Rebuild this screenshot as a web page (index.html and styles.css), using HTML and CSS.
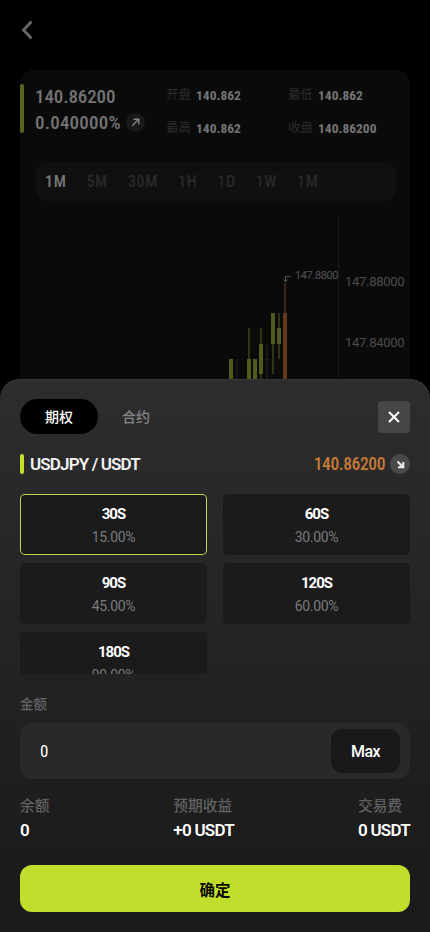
FILE: index.html
```html
<!DOCTYPE html>
<html lang="zh-CN">
<head>
<meta charset="utf-8">
<meta name="viewport" content="width=device-width, initial-scale=1">
<title>USDJPY / USDT</title>
<link rel="stylesheet" href="styles.css">
</head>
<body>
<main class="page">
  <header class="topbar">
    <svg class="back" width="12" height="20" viewBox="0 0 12 20"><path d="M10.500 1.500 2.500 10l8 8.500"/></svg>
  </header>
  <section class="market">
    <div class="summary">
      <i class="bar"></i>
      <div class="quote">
        <div class="price">140.86200</div>
        <div class="change"><span>0.040000%</span>
          <svg class="trend" width="19" height="19" viewBox="0 0 19 19"><circle cx="9.5" cy="9.5" r="9.5"/><path d="m6.2 12.8 6-6M7.5 6.2h5.3v5.3"/></svg>
        </div>
      </div>
      <dl class="stats">
        <div><dt>开盘</dt><dd>140.862</dd></div>
        <div><dt>最低</dt><dd>140.862</dd></div>
        <div><dt>最高</dt><dd>140.862</dd></div>
        <div><dt>收盘</dt><dd>140.86200</dd></div>
      </dl>
    </div>
    <nav class="periods">
      <span class="current">1M</span><span>5M</span><span>30M</span><span>1H</span><span>1D</span><span>1W</span><span>1M</span>
    </nav>
    <svg class="chart" width="390" height="178" viewBox="20 202 390 178">
      <path class="axis" d="M338.5 216v164"/>
      <path class="doji" d="M237 359v21M267 344v36M265 359.5h4"/>
      <path class="wick" d="M249 328v31M261 328v52M273 344v30M279 313v46"/>
      <path class="up" d="M229 359h4v21h-4zM247 359h4v21h-4zM253 359h4v21h-4zM259 344h4v30h-4zM271 313h4v31h-4zM277 328h4v16h-4z"/>
      <path class="down-wick" d="M285 283v30"/>
      <path class="down" d="M283 313h4v67h-4z"/>
      <path class="marker" d="M291 276.5h-5.500v5M283.500 279.500l2 2.500 2-2.500"/>
      <text class="high" x="295" y="279" textLength="43.500">147.8800</text>
      <text class="tick" x="345" y="286" textLength="59.500">147.88000</text>
      <text class="tick" x="345" y="347" textLength="59.500">147.84000</text>
    </svg>
  </section>
</main>
<section class="sheet">
  <div class="sheet-head">
    <div class="tabs"><span class="tab active">期权</span><span class="tab">合约</span></div>
    <button class="close"><svg width="12" height="12" viewBox="0 0 12 12"><path d="m1 1 10 10m0-10-10 10"/></svg></button>
  </div>
  <div class="pair">
    <i class="bar"></i>
    <h1>USDJPY / USDT</h1>
    <div class="last"><span>140.86200</span>
      <svg width="20" height="20" viewBox="0 0 20 20"><circle cx="10" cy="10" r="10"/><path d="m7.500 7.500 5 5M13.300 8v5.300H8"/></svg>
    </div>
  </div>
  <div class="durations">
    <div class="option selected"><b>30S</b><span>15.00%</span></div>
    <div class="option"><b>60S</b><span>30.00%</span></div>
    <div class="option"><b>90S</b><span>45.00%</span></div>
    <div class="option"><b>120S</b><span>60.00%</span></div>
    <div class="option"><b>180S</b><span>90.00%</span></div>
  </div>
  <div class="label">金额</div>
  <div class="amount"><span>0</span><button class="max">Max</button></div>
  <div class="totals">
    <div><span>余额</span><b>0</b></div>
    <div><span>预期收益</span><b>+0 USDT</b></div>
    <div><span>交易费</span><b>0 USDT</b></div>
  </div>
  <button class="confirm">确定</button>
</section>
</body>
</html>
```
FILE: styles.css
```css
* { box-sizing: border-box; }
body {
  margin: 0;
  height: 932px;
  position: relative;
  overflow: hidden;
  background: #000;
  color: #fff;
  font-family: Roboto, "Noto Sans CJK SC", sans-serif;
}
button { margin: 0; padding: 0; border: 0; font: inherit; color: inherit; display: flex; align-items: center; justify-content: center; }
svg { display: block; fill: none; flex: none; }
.page { padding: 0 20px; }
.topbar { height: 70px; padding: 20px 0 0 1px; }
.back path { stroke: #656565; stroke-width: 3; }
.market { height: 330px; background: #0a0a0b; border-radius: 14px; }
.summary { display: flex; padding-top: 14px; height: 92px; }
.bar { width: 4px; border-radius: 2px; background: #c1df2b; flex: none; }
.summary .bar { height: 49px; background: #59641a; }
.quote { width: 142px; height: 49px; padding-left: 11px; color: #747474; font-size: 19px; font-weight: 500; font-stretch: 87%; letter-spacing: -.1px; }
.price { height: 25px; line-height: 25px; }
.change { display: flex; align-items: center; gap: 5px; height: 27px; line-height: 27px; }
.change span { letter-spacing: .2px; }
.trend circle { fill: #19191a; }
.trend path { stroke: #858585; stroke-width: 1.4; }
.stats { margin: 0; display: grid; grid-template-columns: 122px 110px; grid-auto-rows: 33px; font-size: 13.500px; }
.stats div { display: flex; gap: 5px; line-height: 22px; }
.stats dt { color: #2c2c2c; font-size: 12.500px; }
.stats dd { margin: 0; color: #747474; font-weight: 700; font-stretch: 87%; }
.periods { margin: 0 14px 0 16px; height: 39px; border-radius: 10px; background: #101011; display: flex; align-items: center; gap: 20px; padding-left: 9px; color: #29292a; font-size: 16px; font-weight: 500; font-stretch: 87%; letter-spacing: .67px; }
.periods .current { color: #777; }
.chart { margin-top: 1px; font-family: Roboto, sans-serif; }
.axis { stroke: #1a1a1b; }
.doji { stroke: #242426; }
.wick { stroke: #3c4318; stroke-width: 1.5; }
.up { fill: #515b1e; }
.down-wick { stroke: #41271a; stroke-width: 2; }
.down { fill: #613a1b; }
.marker { stroke: #555; }
.high { fill: #555; font-size: 11px; }
.tick { fill: #4c4c4d; font-size: 13px; }

.sheet { position: absolute; left: 0; right: 0; bottom: 0; height: 553px; padding: 20px; border-radius: 20px 20px 0 0; background: linear-gradient(#2d2d2e, #1b1b1c 90%); box-shadow: inset 0 1px #363637; }
.sheet-head { display: flex; justify-content: space-between; align-items: center; height: 35px; }
.tabs { display: flex; }
.tab { width: 78px; height: 35px; line-height: 37px; border-radius: 18px; text-align: center; font-size: 14px; font-weight: 500; color: #858586; }
.tab:last-child { width: 76px; }
.tab.active { background: #000; color: #fff; }
.close { width: 32px; height: 32px; border-radius: 4px; background: #464647; }
.close path { stroke: #fff; stroke-width: 2; }
.pair { display: flex; align-items: center; height: 20px; margin-top: 20px; }
.pair .bar { height: 20px; }
.pair h1 { margin: 0 auto 0 6px; font-size: 17px; line-height: 20px; font-weight: 600; color: #f2f2f2; letter-spacing: -.85px; }
.last { display: flex; align-items: center; gap: 5px; font-size: 17.500px; color: #c67a37; font-weight: 500; font-stretch: 87%; letter-spacing: -.4px; }
.last circle { fill: #49494a; }
.last path { stroke: #eee; stroke-width: 2; }
.durations { display: grid; grid-template-columns: 187px 187px; column-gap: 16px; row-gap: 8px; grid-auto-rows: 61px; height: 180px; margin-top: 20px; overflow: hidden; }
.option { border-radius: 5px; background: #1b1b1c; display: flex; flex-direction: column; align-items: center; padding-top: 9px; }
.option.selected { box-shadow: inset 0 0 0 1px #bed74a; }
.option b { font-size: 15px; line-height: 23px; font-weight: 700; letter-spacing: -1px; }
.option span { font-size: 14px; line-height: 23px; color: #7a7a7b; letter-spacing: -.3px; }
.label { margin-top: 20px; height: 20px; line-height: 20px; font-size: 13.500px; font-weight: 500; color: #636364; }
.amount { margin-top: 9px; height: 56px; border-radius: 13px; background: #29292a; display: flex; align-items: center; justify-content: space-between; padding: 0 10px 0 20px; font-size: 17px; }
.amount > span { font-stretch: 87%; }
.max { width: 69px; height: 44px; border-radius: 11px; background: #19191b; font-size: 16px; font-weight: 500; letter-spacing: -.5px; }
.totals { display: flex; justify-content: space-between; margin-top: 16px; height: 50px; }
.totals div { display: flex; flex-direction: column; }
.totals span { height: 22px; line-height: 22px; font-size: 14.700px; font-weight: 500; color: #616162; }
.totals b { line-height: 27px; font-size: 17px; font-weight: 600; letter-spacing: -.75px; }
.confirm { margin-top: 20px; width: 100%; height: 47px; border-radius: 12px; background: #c0df2c; color: #080a00; font-size: 15.500px; font-weight: 700; }
```
